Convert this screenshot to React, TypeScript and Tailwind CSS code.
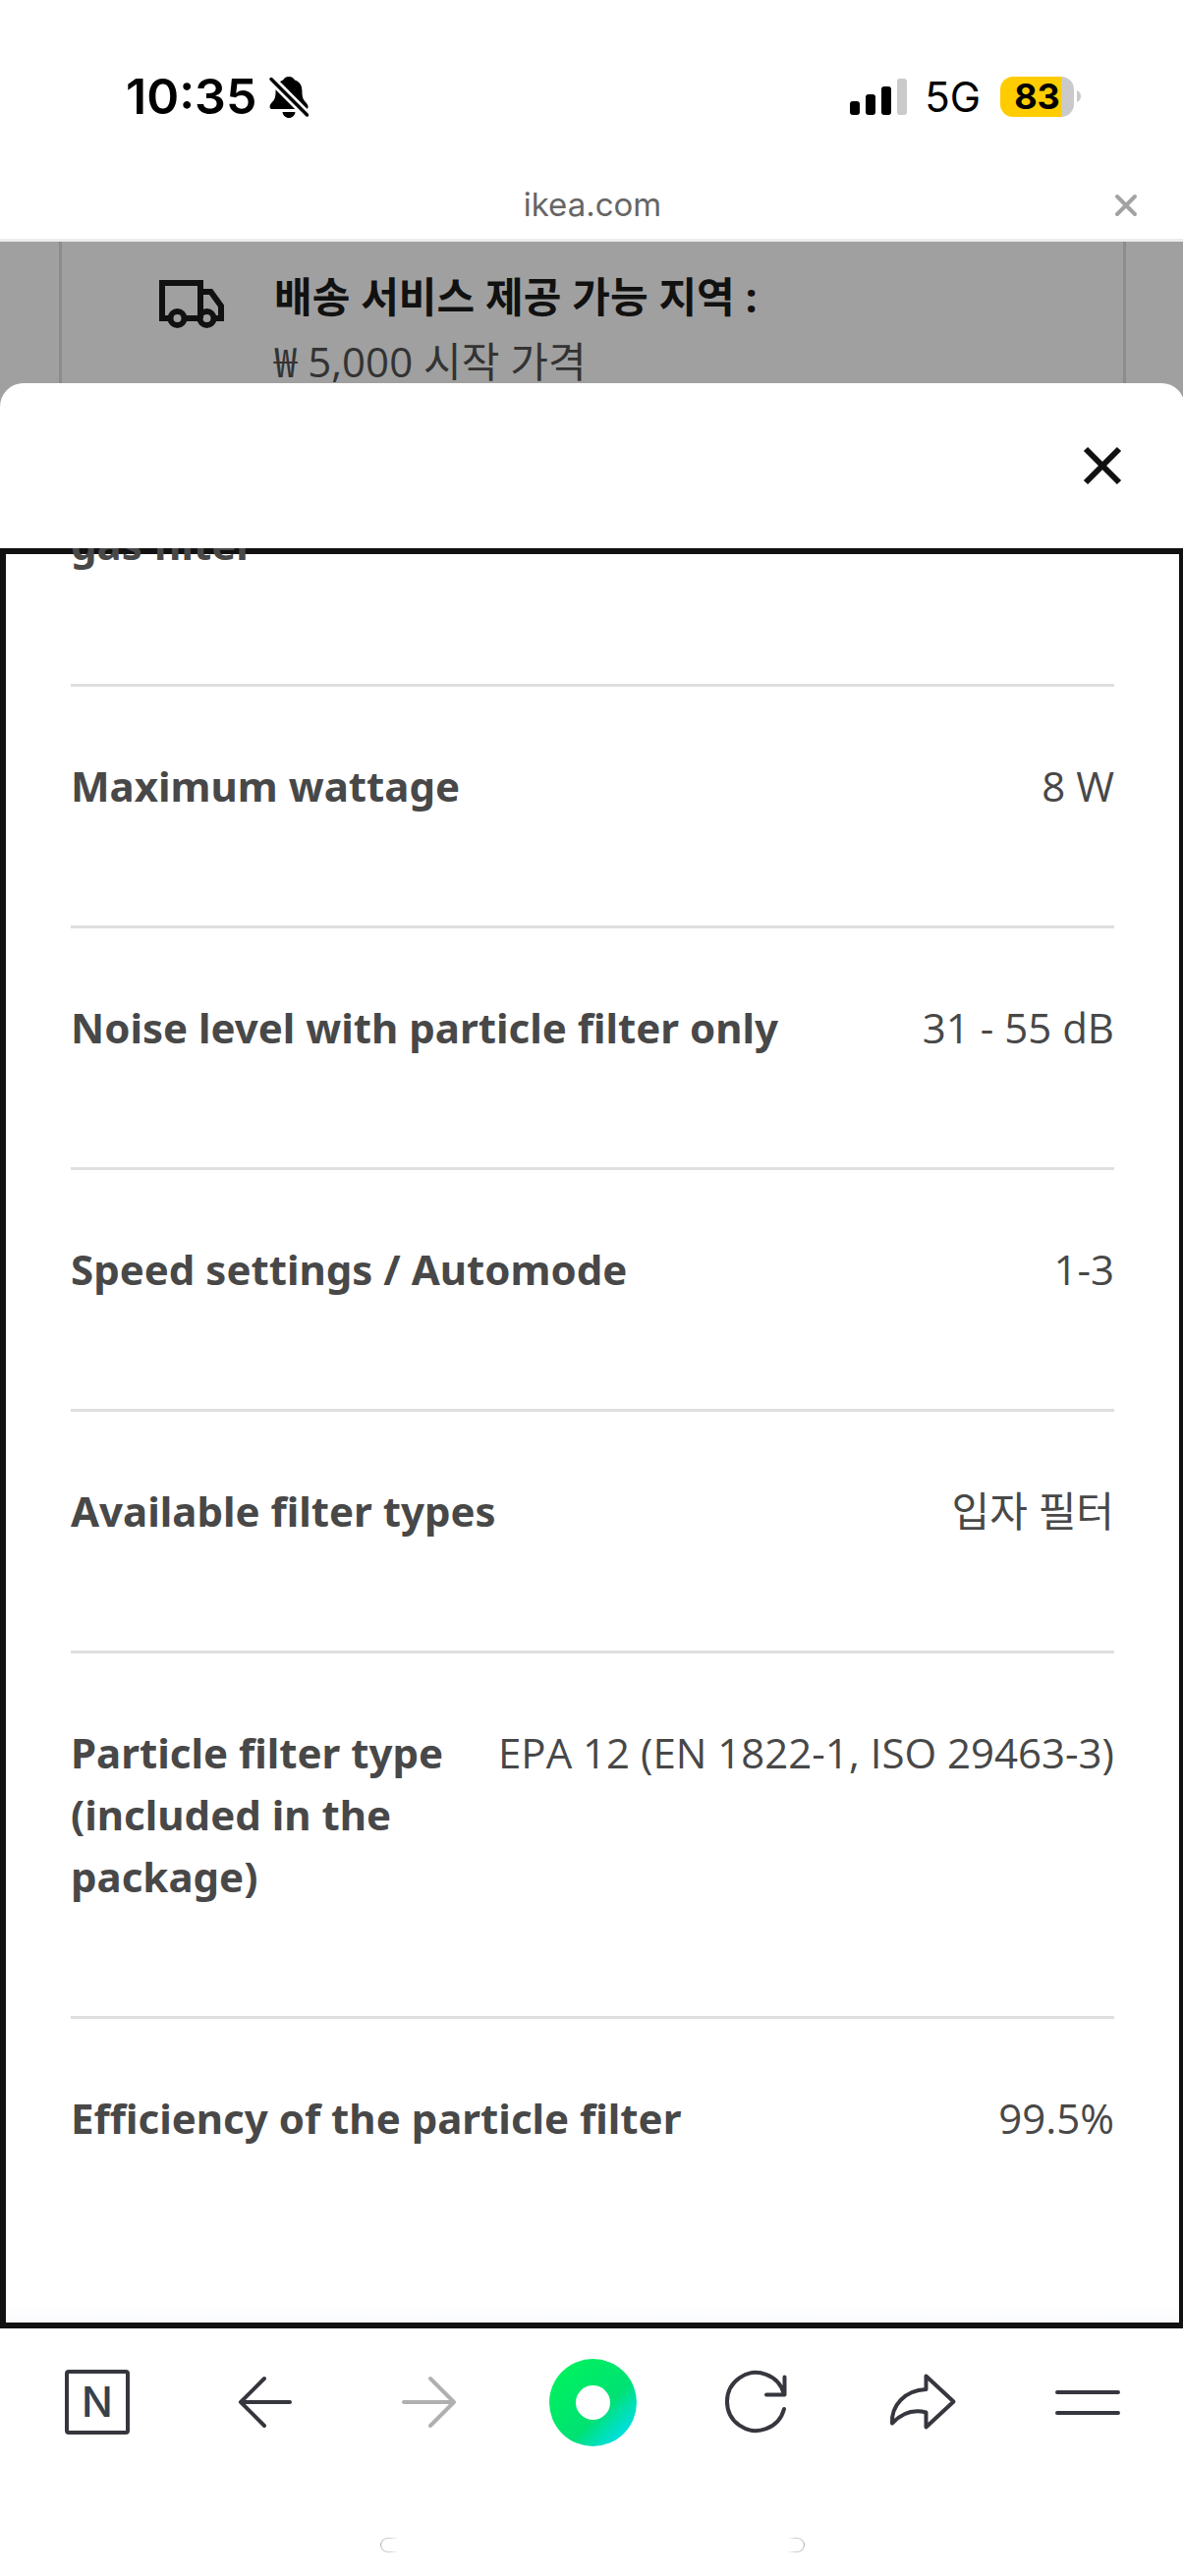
import type { ReactNode } from 'react';

const SPECS = [
  { label: 'gas filter',                                value: '' },
  { label: 'Maximum wattage',                           value: '8 W' },
  { label: 'Noise level with particle filter only',     value: '31 - 55 dB' },
  { label: 'Speed settings / Automode',                 value: '1-3' },
  { label: 'Available filter types',                    value: '입자 필터' },
  { label: 'Particle filter type (included in the package)', value: 'EPA 12 (EN 1822-1, ISO 29463-3)' },
  { label: 'Efficiency of the particle filter',         value: '99.5%' },
];

function StatusBar() {
  return (
    <div className="flex h-[174px] items-center justify-between pt-[22px] pr-[106px] pl-32 text-black">
      <div className="flex items-center gap-3">
        <span className="text-[50px] font-semibold">10:35</span>
        <svg className="h-[44px] w-[42px]" viewBox="0 0 42 44" aria-label="Silent mode">
          <path
            d="M21 2c-3 0-5 1.500-6 3.600C9 8 7.500 13 7.500 18c0 6-1.500 8-4 10.500-1.500 1.500-2 3-1.900 4.500C1.700 34.500 2.700 35 4 35h34c2 0 2.800-1.200 2.500-3-.3-1.600-1.300-2.600-2.500-4-2.400-2.600-3.500-5-3.500-10 0-6-1.500-10.500-7.500-12.400C26 3.500 24 2 21 2Z"
            fill="currentColor"
          />
          <path d="M14.500 38h13c-.5 3.500-3 6-6.500 6s-6-2.500-6.500-6Z" fill="currentColor" />
          <path d="M3 4.500 39.500 41" stroke="#fff" strokeWidth="9" />
          <path d="M3 4.500 39.500 41" stroke="currentColor" strokeWidth="3.500" strokeLinecap="round" />
        </svg>
      </div>

      <div className="flex items-center">
        <svg className="mr-[18px] h-[38px] w-[58px]" viewBox="0 0 58 38" aria-label="Signal">
          <rect x="0" y="24" width="10" height="14" rx="3" fill="currentColor" />
          <rect x="16" y="17" width="10" height="21" rx="3" fill="currentColor" />
          <rect x="32" y="9" width="10" height="29" rx="3" fill="currentColor" />
          <rect x="48" y="1" width="10" height="37" rx="3" fill="#cacaca" />
        </svg>
        <span className="mr-5 text-[42px]">5G</span>
        <div className="flex h-[41px] w-[75px] items-center justify-center rounded-[13px] bg-linear-to-r from-[#ffcc00] from-83% to-[#cacaca] to-83%">
          <span className="text-[36px] leading-none font-bold">83</span>
        </div>
        <svg className="ml-[3px] h-3 w-1" viewBox="0 0 4 12">
          <path d="M0 0c2.500 1 4 3.300 4 6s-1.500 5-4 6Z" fill="#cacaca" />
        </svg>
      </div>
    </div>
  );
}

function AddressBar() {
  return (
    <div className="grid h-[72px] grid-cols-[1fr_auto_1fr] items-center border-b-3 border-[#ececec] px-[42px]">
      <span />
      <span className="text-[33px] text-[#666]">ikea.com</span>
      <button type="button" aria-label="Close page" className="justify-self-end">
        <svg className="h-9 w-9" viewBox="0 0 36 36" fill="none" stroke="#a2a2a2" strokeWidth="4" strokeLinecap="round">
          <path d="m9 9 18 18M27 9 9 27" />
        </svg>
      </button>
    </div>
  );
}

// Dimmed product page that shows above the sheet
function DeliveryCard() {
  return (
    <div className="mx-[60px] flex h-36 items-start gap-12 overflow-hidden border-x-3 border-[#8c8c8c] pt-6 pl-24 text-[42px] leading-[63px]">
      <svg className="h-[72px] w-[72px] shrink-0" viewBox="0 0 72 72" fill="none" stroke="#111" strokeWidth="6">
        <path d="M14 54H6V18h39v36M28 54h17M45 27h10.500L66 41.500V54h-6" />
        <circle cx="21.500" cy="54" r="7" />
        <circle cx="51.500" cy="54" r="7" />
      </svg>
      <div className="flex flex-col gap-[3px]">
        <p className="font-bold text-[#111]">배송 서비스 제공 가능 지역 :</p>
        <p className="font-['Open_Sans','Noto_Sans_CJK_KR',sans-serif] text-[#333]">₩ 5,000 시작 가격</p>
      </div>
    </div>
  );
}

function SpecTable() {
  return (
    <div className="relative overflow-hidden px-[72px] pb-[72px] shadow-[inset_0_0_0_6px_#111]">
      <table className="-mt-9 block text-[42px] leading-[63px] text-[#484848]">
        <tbody className="block divide-y-3 divide-[#dfdfdf]">
          {SPECS.map(spec => (
            <tr key={spec.label} className="flex justify-between gap-12 pt-[69px] pb-[111px] first:pt-0">
              <th scope="row" className="text-left font-bold">{spec.label}</th>
              <td className="shrink-0 text-right font-['Open_Sans','Noto_Sans_CJK_KR',sans-serif]">{spec.value}</td>
            </tr>
          ))}
        </tbody>
      </table>
      <div className="absolute inset-x-1.5 bottom-1.5 h-4 bg-linear-to-b from-transparent to-[#f8f9fb]" />
    </div>
  );
}

function ToolButton({ label, muted = false, children }: { label: string; muted?: boolean; children: ReactNode }) {
  return (
    <button type="button" aria-label={label} className="flex items-center justify-center">
      <svg
        className="h-[72px] w-[72px]"
        viewBox="0 0 72 72"
        fill="none"
        stroke={muted ? '#b0b0b1' : '#36373e'}
        strokeWidth="4"
        strokeLinecap="round"
        strokeLinejoin="round"
      >
        {children}
      </svg>
    </button>
  );
}

function Toolbar() {
  return (
    <nav className="bg-white pb-6">
      <div className="grid h-[150px] grid-cols-7 px-[15px]">
        <button type="button" aria-label="Naver home" className="flex items-center justify-center">
          <span className="flex h-[66px] w-[66px] items-center justify-center rounded-sm border-4 border-[#36373e] text-[42px] leading-none font-medium text-[#36414b]">
            N
          </span>
        </button>
        <ToolButton label="Back">
          <path d="M38 12 14 36l24 24M14 36h50" />
        </ToolButton>
        <ToolButton label="Forward" muted>
          <path d="m39 12 24 24-24 24M63 36H12" />
        </ToolButton>
        <button type="button" aria-label="Green dot" className="flex items-center justify-center">
          <span className="flex h-[89px] w-[89px] items-center justify-center rounded-full bg-linear-135 from-[#00f25c] from-10% via-[#00e173] via-60% to-[#00dcf0] to-90%">
            <span className="h-[35px] w-[35px] rounded-full bg-white" />
          </span>
        </button>
        <ToolButton label="Reload">
          <path d="M63 28A29.500 29.500 0 1 0 63 43M63.500 10.500v18H45" />
        </ToolButton>
        <ToolButton label="Share">
          <path d="M39.500 9.500 67.500 35.500 39.500 61.500V46.500C26 43 15 47 5 57.500 4 40 17 24 39.500 23Z" />
        </ToolButton>
        <ToolButton label="Menu">
          <path d="M5 26h62M5 47h62" />
        </ToolButton>
      </div>
      {/* Home indicator, only its ends stay visible on white */}
      <div className="mx-auto mt-[63px] h-[15px] w-[432px] rounded-full border border-[#999] mask-[linear-gradient(to_right,#000,transparent_18px,transparent_calc(100%-18px),#000)]" />
    </nav>
  );
}

export default function App() {
  return (
    <div className="overflow-hidden bg-white font-['Inter',sans-serif]">
      <div className="-mr-0.5">
        <StatusBar />
        <AddressBar />
        <div className="bg-[#a0a0a0] font-['Noto_Sans','Noto_Sans_CJK_KR',sans-serif]">
          <DeliveryCard />
          <section role="dialog" aria-label="Product details" className="rounded-t-3xl bg-white">
            <div className="flex h-[168px] items-center justify-end pr-6">
              <button type="button" aria-label="Close" className="flex h-[120px] w-[120px] items-center justify-center">
                <svg className="h-12 w-12" viewBox="0 0 48 48" stroke="#111" strokeWidth="6">
                  <path d="m7 7 34 34M41 7 7 41" />
                </svg>
              </button>
            </div>
            <SpecTable />
          </section>
        </div>
        <Toolbar />
      </div>
    </div>
  );
}
